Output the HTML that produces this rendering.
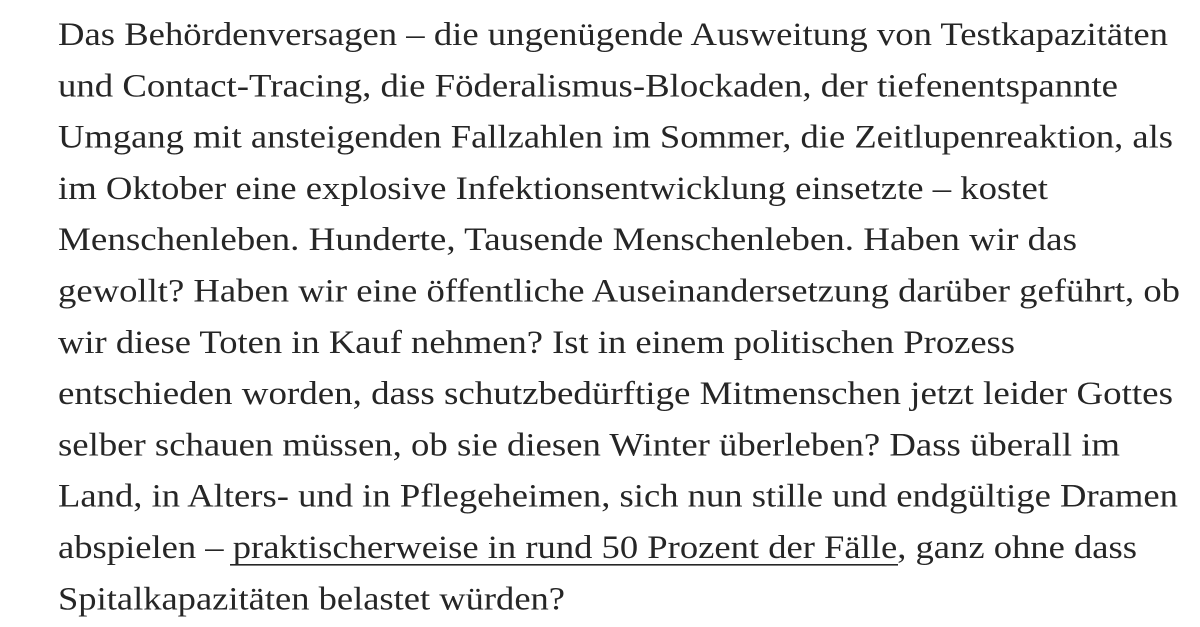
<!DOCTYPE html>
<html><head><meta charset="utf-8"><style>
html,body{margin:0;padding:0;background:#fff;width:1200px;height:627px;overflow:hidden}
svg text{font-family:"Liberation Serif",serif;font-size:33px;fill:#262626}
</style></head><body>
<svg width="1200" height="627" xmlns="http://www.w3.org/2000/svg">
<text x="58" y="45" textLength="1110" lengthAdjust="spacingAndGlyphs">Das Behördenversagen – die ungenügende Ausweitung von Testkapazitäten</text>
<text x="58" y="96.3" textLength="1060" lengthAdjust="spacingAndGlyphs">und Contact-Tracing, die Föderalismus-Blockaden, der tiefenentspannte</text>
<text x="58" y="147.6" textLength="1115" lengthAdjust="spacingAndGlyphs">Umgang mit ansteigenden Fallzahlen im Sommer, die Zeitlupenreaktion, als</text>
<text x="58" y="198.9" textLength="990" lengthAdjust="spacingAndGlyphs">im Oktober eine explosive Infektionsentwicklung einsetzte – kostet</text>
<text x="58" y="250.2" textLength="1019" lengthAdjust="spacingAndGlyphs">Menschenleben. Hunderte, Tausende Menschenleben. Haben wir das</text>
<text x="58" y="301.5" textLength="1122" lengthAdjust="spacingAndGlyphs">gewollt? Haben wir eine öffentliche Auseinandersetzung darüber geführt, ob</text>
<text x="58" y="352.8" textLength="957" lengthAdjust="spacingAndGlyphs">wir diese Toten in Kauf nehmen? Ist in einem politischen Prozess</text>
<text x="58" y="404.1" textLength="1115" lengthAdjust="spacingAndGlyphs">entschieden worden, dass schutzbedürftige Mitmenschen jetzt leider Gottes</text>
<text x="58" y="455.4" textLength="1062" lengthAdjust="spacingAndGlyphs">selber schauen müssen, ob sie diesen Winter überleben? Dass überall im</text>
<text x="58" y="506.7" textLength="1120" lengthAdjust="spacingAndGlyphs">Land, in Alters- und in Pflegeheimen, sich nun stille und endgültige Dramen</text>
<text x="58" y="558" textLength="1079" lengthAdjust="spacingAndGlyphs">abspielen – praktischerweise in rund 50 Prozent der Fälle, ganz ohne dass</text>
<text x="58" y="609.3" textLength="507" lengthAdjust="spacingAndGlyphs">Spitalkapazitäten belastet würden?</text>
<rect x="230" y="564" width="668" height="1.6" fill="#262626"/>
</svg>
</body></html>
